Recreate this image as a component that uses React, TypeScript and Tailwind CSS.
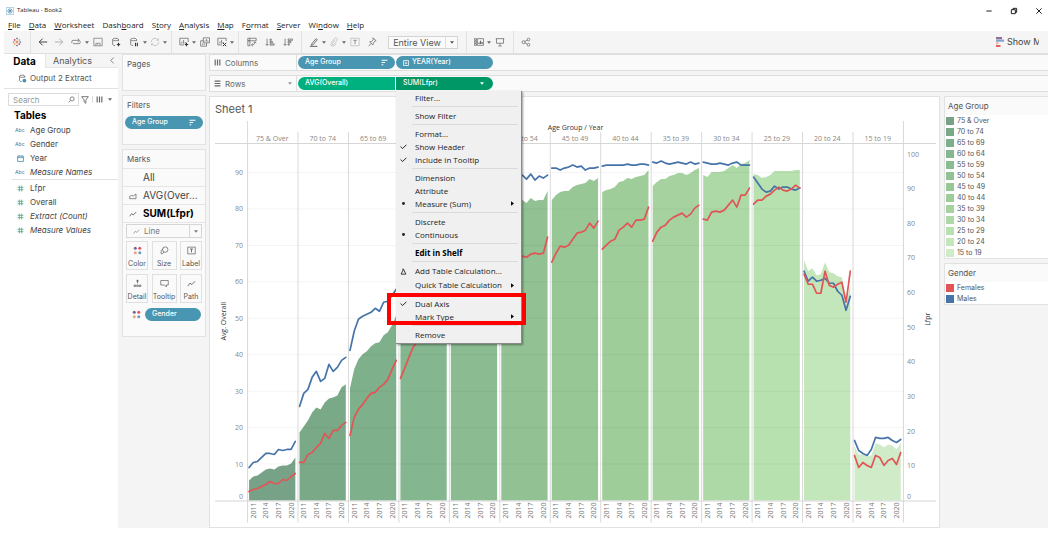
import type { ReactNode } from "react";

type Series = number[];
type Pane = { label: string; fill: string; area: Series; males: Series; females: Series };

/* Values are heights above the zero line, in chart units. */
const panes: Pane[] = [
  { label: "75 & Over", fill: "#78a287", area: [20, 24, 25, 28, 31, 32, 31, 34, 35, 35, 37, 43], males: [33, 38, 39, 43, 47, 47, 46, 51, 50, 51, 51, 59], females: [9, 11, 12, 14, 16, 19, 17, 17, 21, 20, 24, 27] },
  { label: "70 to 74", fill: "#79a987", area: [68, 74, 80, 88, 93, 91, 98, 102, 103, 105, 113, 116], males: [94, 107, 111, 123, 129, 119, 122, 136, 129, 133, 140, 143], females: [38, 38, 46, 48, 53, 57, 67, 62, 70, 70, 75, 78] },
  { label: "65 to 69", fill: "#7eb08b", area: [112, 131, 141, 146, 149, 154, 157, 158, 165, 168, 175, 185], males: [150, 169, 181, 184, 186, 188, 192, 189, 198, 199, 205, 211], females: [65, 83, 91, 96, 102, 107, 108, 113, 116, 121, 131, 140] },
  { label: "60 to 64", fill: "#84b68f", area: [190, 202, 210, 216, 220, 224, 228, 231, 235, 238, 243, 250], males: [228, 238, 246, 250, 255, 258, 262, 264, 267, 270, 274, 279], females: [122, 132, 143, 153, 158, 164, 169, 172, 178, 182, 188, 196] },
  { label: "55 to 59", fill: "#8abb91", area: [252, 257, 262, 266, 268, 270, 272, 274, 277, 279, 282, 286], males: [288, 292, 296, 299, 301, 303, 304, 306, 307, 309, 311, 314], females: [192, 198, 203, 208, 211, 214, 217, 219, 222, 225, 228, 232] },
  { label: "50 to 54", fill: "#92c194", area: [286, 291, 294, 296, 299, 300, 297, 302, 299, 300, 300, 309], males: [318, 321, 323, 324, 322, 325, 321, 326, 320, 324, 322, 325], females: [228, 233, 238, 241, 243, 244, 243, 246, 247, 246, 247, 263] },
  { label: "45 to 49", fill: "#98c796", area: [300, 305, 308, 309, 309, 313, 315, 316, 317, 321, 319, 322], males: [332, 332, 330, 332, 333, 335, 333, 334, 330, 332, 332, 333], females: [238, 247, 254, 253, 255, 261, 267, 268, 270, 277, 272, 279] },
  { label: "40 to 44", fill: "#9fcd9a", area: [308, 310, 311, 313, 318, 319, 322, 321, 323, 324, 325, 330], males: [334, 335, 335, 335, 335, 335, 336, 335, 335, 336, 336, 335], females: [251, 255, 259, 261, 270, 273, 277, 273, 280, 280, 281, 293] },
  { label: "35 to 39", fill: "#a6d2a0", area: [314, 318, 321, 321, 324, 325, 327, 327, 325, 327, 330, 332], males: [338, 337, 339, 337, 336, 337, 338, 337, 336, 338, 336, 337], females: [259, 268, 273, 275, 280, 283, 285, 287, 283, 286, 292, 295] },
  { label: "30 to 34", fill: "#add9a6", area: [325, 323, 328, 328, 328, 329, 332, 335, 332, 336, 337, 340], males: [338, 337, 336, 336, 337, 336, 335, 337, 338, 335, 335, 335], females: [281, 280, 288, 289, 288, 290, 295, 300, 293, 305, 305, 312] },
  { label: "25 to 29", fill: "#b7e1af", area: [326, 325, 322, 323, 325, 329, 329, 329, 329, 329, 330, 330], males: [323, 317, 311, 308, 309, 314, 311, 313, 313, 311, 310, 312], females: [296, 300, 300, 304, 306, 310, 313, 310, 309, 311, 315, 312] },
  { label: "20 to 24", fill: "#c3e6bb", area: [240, 229, 232, 225, 226, 238, 228, 227, 224, 223, 195, 215], males: [229, 219, 223, 219, 220, 222, 217, 217, 209, 205, 190, 204], females: [226, 216, 216, 207, 207, 229, 215, 213, 216, 218, 198, 229] },
  { label: "15 to 19", fill: "#cfebc8", area: [54, 46, 46, 44, 45, 57, 56, 53, 56, 55, 51, 58], males: [60, 50, 47, 45, 51, 63, 62, 62, 63, 60, 58, 61], females: [45, 33, 38, 35, 33, 45, 43, 35, 40, 42, 36, 48] },
];

const LEFT = 37;
const BASE = 386;
const RIGHT = 692;
const PANE = (RIGHT - LEFT) / panes.length;
const px = (pane: number, i: number) => LEFT + pane * PANE + 2 + i * 4.2;
const points = (s: Series, pane: number) => s.map((v, i) => `${px(pane, i).toFixed(1)},${BASE - v}`).join(" ");

function Chart() {
  return (
    <svg viewBox="0 0 728 412" className="block w-full font-['Open_Sans',sans-serif]" role="img" aria-label="Avg. Overall and Lfpr by age group and year">
      <text x="365" y="16" fontSize="7" textAnchor="middle" fill="#333">Age Group  /  Year</text>
      {panes.map((p, k) => (
        <g key={p.label}>
          <polygon points={`${px(k, 0)},${BASE} ${points(p.area, k)} ${px(k, 11)},${BASE}`} fill={p.fill} />
          <text x={LEFT + (k + 0.5) * PANE} y="26.500" fontSize="7" textAnchor="middle" fill="#888">{p.label}</text>
          {[2011, 2014, 2017, 2020].map((year, j) => (
            <text key={year} transform={`translate(${px(k, 1 + j * 3) + 2.5} 404) rotate(-90)`} fontSize="7" fill="#777">{year}</text>
          ))}
        </g>
      ))}
      {[1, 2, 3, 4, 5, 6, 7, 8, 9].map((n) => (
        <line key={n} x1={LEFT} x2={RIGHT} y1={BASE - n * 36.4} y2={BASE - n * 36.4} stroke="#000" strokeOpacity="0.045" />
      ))}
      {panes.map((p, k) => (
        <g key={p.label} fill="none" strokeWidth="1.7" strokeLinejoin="round" strokeLinecap="round">
          <polyline points={points(p.males, k)} stroke="#4674a9" />
          <polyline points={points(p.females, k)} stroke="#e15557" />
        </g>
      ))}
      {Array.from({ length: 14 }, (_, k) => (
        <line key={k} x1={LEFT + k * PANE + 0.5} x2={LEFT + k * PANE + 0.5} y1={k === 0 || k === 13 ? 7 : 18} y2="408" stroke="#d9d9d9" />
      ))}
      <line x1="5" x2="725" y1="29.500" y2="29.500" stroke="#d6d6d6" />
      <line x1="5" x2="725" y1="386.500" y2="386.500" stroke="#d6d6d6" />
      {[0, 1, 2, 3, 4, 5, 6, 7, 8, 9].map((n) => (
        <text key={n} x="33" y={BASE + 2.5 - (n === 0 ? 4 : n * 36.4)} fontSize="7" textAnchor="end" fill="#888">{n * 10}</text>
      ))}
      {[0, 1, 2, 3, 4, 5, 6, 7, 8, 9, 10].map((n) => (
        <text key={n} x="696" y={BASE + 2.5 - (n === 0 ? 4 : n * 34.6)} fontSize="7" fill="#888">{n * 10}</text>
      ))}
      <text transform="translate(16 207) rotate(-90)" fontSize="7" textAnchor="middle" fill="#333">Avg. Overall</text>
      <text transform="translate(719 205) rotate(-90)" fontSize="7" textAnchor="middle" fill="#333">Lfpr</text>
    </svg>
  );
}

function Svg({ children, className = "h-3 w-3" }: { children: ReactNode; className?: string }) {
  return (
    <svg viewBox="0 0 12 12" className={`${className} shrink-0`} fill="none" stroke="currentColor" strokeWidth="0.9" aria-hidden="true">
      {children}
    </svg>
  );
}

const plus = <path d="M9 7v4M7 9h4" stroke="#333" strokeWidth="1.4" />;
const bars = <path d="M3.500 8V5.500M5.500 8V3.500M7.500 8V6" />;

const glyphs: Record<string, ReactNode> = {
  logo: (
    <>
      <path d="M6 4.300v3.400M4.300 6h3.400" stroke="#e8762d" strokeWidth="1.200" />
      <path d="M6 .8v2M5 1.800h2" stroke="#5c6692" />
      <path d="M6 9.200v2M5 10.200h2" stroke="#5c6692" />
      <path d="M1 6h2M2 5v2" stroke="#6aa5b5" />
      <path d="M9 6h2M10 5v2" stroke="#4e79a7" />
      <path d="M3.200 2.500v2M2.200 3.500h2M8.800 7.500v2M7.800 8.500h2" stroke="#c72035" />
      <path d="M8.800 2.500v2M7.800 3.500h2M3.200 7.500v2M2.200 8.500h2" stroke="#eb912c" />
    </>
  ),
  back: <path d="M11 6H1.500M5.500 2L1.500 6l4 4" strokeWidth="1.200" stroke="#444" />,
  forward: <path d="M1 6h9.500M6.500 2l4 4-4 4" stroke="#999" />,
  replay: <path d="M1 7.500V5.500Q1 4 2.500 4H10M8 2l2.200 2L8 6M11 5v1.500Q11 8 9.500 8H2.500" />,
  save: <path d="M1 1.500h10v9H1zM3.500 10.500V7.500h5v3M5 9h1" stroke="#777" />,
  data: <><path d="M9 5V3M2 3v6q0 1 3 1.300M2 3q0-1.500 3.500-1.500T9 3 5.500 4.500 2 3" />{plus}</>,
  pause: <><path d="M9 5V3M2 3v6q0 1 3 1.300M2 3q0-1.500 3.500-1.500T9 3 5.500 4.500 2 3" /><path d="M7.800 7v4M10 7v4" stroke="#333" strokeWidth="1.300" /></>,
  refresh: <path d="M1.500 6A4.500 4.500 0 0 1 9.700 3.500M10.500 6A4.500 4.500 0 0 1 2.300 8.500M8 4h2.200V1.800M4 8H1.800v2.200" stroke="#bbb" />,
  sheet: <><path d="M11 6V1.500H1v8h5" />{bars}{plus}</>,
  duplicate: <><path d="M4 1h7.500v6H4zM4 4.500H.8V11h7V7" /><path d="M6 5.500V4M7.800 5.500v-3M9.500 5.500V4M3 9.500V8M5 9.500V8" /></>,
  clear: <><path d="M11 5V1.500H1v8h5" />{bars}<path d="M7 7l4 4M11 7l-4 4" stroke="#333" strokeWidth="1.200" /></>,
  swap: <path d="M1 1.500h10v3H1zM1 4.500h2.500V10.500H1zM3.500 1.500v3M9.500 6c0 2.500-1.500 3.500-4 3.500M7 8L5.300 9.600 7 11.200M8 7.300L9.500 5.600 11 7.300" />,
  asc: <path d="M2.500 2v8M.8 8.300l1.700 1.900 1.700-1.900M6 2.500h1.500V4H6zM6 5.300h3v1.500H6zM6 8.200h5v1.500H6z" />,
  desc: <path d="M2.500 2v8M.8 8.300l1.700 1.900 1.700-1.900M6 2.500h5.500V4H6zM6 5.300h3.500v1.500H6zM6 8.200h1.700v1.500H6z" />,
  pen: <><path d="M3.500 8l5-6 1.500 1.200-5 6-2.200.8z" strokeWidth="1.100" /><path d="M1 11.200h9" strokeWidth="1.200" /></>,
  clip: <path d="M7 3.500L4 7.500q-.6 1.200.3 1.700t1.700-.4L9.500 4q1-1.700-.4-2.600T6.500 2L3 6.500Q1.300 9 3 10.500t4-.5L8.500 8" stroke="#bbb" />,
  text: <><path d="M1 1.500h10v9H1z" stroke="#bbb" /><path d="M4 4h4M6 4v4.500" stroke="#888" strokeWidth="1.100" /></>,
  pin: <path d="M7 1l4 3.500-1.500.3-2 2.500-.3 2.200-4-3.700 2.300-.3 2-2.500zM5 7.800L2 11" />,
  cards: <><path d="M.5 2h2.500v2H.5zM.5 5h2.500v2H.5zM.5 8h2.500v2H.5zM4 2h7.500v8H4z" /><path d="M6 8.500V6.500M7.800 8.500v-4M9.700 8.500V6" strokeWidth="1.400" /></>,
  present: <path d="M.8 2h10.400M1.800 2v5.500h8.400V2M6 7.500v3M4 10.800h4" />,
  share: <><circle cx="3" cy="6.200" r="1.800" /><circle cx="9" cy="3" r="1.600" /><circle cx="9" cy="9.300" r="1.600" /><path d="M4.600 5.400l2.900-1.600M4.600 7l2.900 1.500" /></>,
  area: <path d="M1 10V6.500l3-1.500 2.500 1L10.500 3v7z" />,
  line: <path d="M1 9.500L4 5.500l2.500 2L10.800 3" strokeWidth="1.100" />,
  size: <><circle cx="7" cy="4.800" r="3.600" /><path d="M4 3.500Q1 6 1.200 9q0 1.500 1.500 1.500T5 8" /></>,
  label: <><path d="M1 1.500h10v9H1z" /><path d="M4 4h4M6 4v4.500" strokeWidth="1.100" /></>,
  detail: <><circle cx="6" cy="2.500" r="1" fill="currentColor" /><path d="M6 3v3M1.500 8h2v2h-2zM5 8h2v2H5zM8.500 8h2v2h-2z" /></>,
  tooltip: <path d="M1 2h10v6H8.500v2.500L6 8H1z" />,
  database: <><path d="M9 5V3M2 3v6q0 1 3 1.300M2 3q0-1.500 3.500-1.500T9 3 5.500 4.500 2 3" /><circle cx="8.500" cy="8.700" r="2.500" fill="#4a90b0" stroke="none" /></>,
};

const Glyph = ({ name, className }: { name: string; className?: string }) => <Svg className={className}>{glyphs[name]}</Svg>;

function ColorDots() {
  return (
    <svg viewBox="0 0 12 12" className="h-[9px] w-[9px] shrink-0" aria-hidden="true">
      <circle cx="3" cy="3" r="2" fill="#7b6690" />
      <circle cx="9" cy="3" r="2" fill="#e15563" />
      <circle cx="3" cy="9" r="2" fill="#f0a17a" />
      <circle cx="9" cy="9" r="2" fill="#6d9cc8" />
    </svg>
  );
}

const Caret = ({ className = "w-2" }: { className?: string }) => (
  <span className={`flex shrink-0 justify-center ${className}`}>
    <svg viewBox="0 0 6 4" className="h-[3px] w-1 fill-current" aria-hidden="true"><path d="M0 0h6L3 4z" /></svg>
  </span>
);

const Tool = ({ name, label, className = "w-4" }: { name: string; label: string; className?: string }) => (
  <button aria-label={label} className={`flex h-4 shrink-0 items-center justify-center ${className}`}><Glyph name={name} className="h-[10px] w-[10px]" /></button>
);
const Rule = ({ className = "mx-1" }: { className?: string }) => <span className={`h-full w-px shrink-0 bg-[#e2e2e2] ${className}`} />;

function Toolbar() {
  return (
    <div className="ml-1 flex h-[22px] items-center overflow-hidden bg-[#f5f5f5] text-[#666]">
      <Tool name="logo" label="Start page" className="w-[26px]" />
      <Rule className="mr-1" />
      <Tool name="back" label="Undo" className="w-4" />
      <Tool name="forward" label="Redo" className="w-4" />
      <Tool name="replay" label="Replay" className="w-[18px]" />
      <Caret className="w-1" />
      <Tool name="save" label="Save" className="w-[18px]" />
      <Tool name="data" label="New data source" className="w-[18px]" />
      <Tool name="pause" label="Pause updates" className="w-[18px]" />
      <Caret className="w-1" />
      <Tool name="refresh" label="Refresh" className="w-4" />
      <Caret className="w-1" />
      <Rule />
      <Tool name="sheet" label="New worksheet" className="w-4" />
      <Caret className="w-1" />
      <Tool name="duplicate" label="Duplicate" className="w-[18px]" />
      <Tool name="clear" label="Clear sheet" className="w-4" />
      <Caret className="w-1" />
      <Rule />
      <Tool name="swap" label="Swap rows and columns" className="w-[18px]" />
      <Tool name="asc" label="Sort ascending" className="w-[18px]" />
      <Tool name="desc" label="Sort descending" className="w-[18px]" />
      <Rule />
      <Tool name="pen" label="Highlight" className="w-4" />
      <Caret className="w-1" />
      <Tool name="clip" label="Group members" className="w-4" />
      <Caret className="w-1" />
      <Tool name="text" label="Show mark labels" className="w-[18px]" />
      <Tool name="pin" label="Fix axes" className="w-4" />
      <button className="ml-2 flex h-[13px] w-[70px] shrink-0 items-center border border-[#d4d4d4] bg-[#fafafa] text-[9px] leading-none text-[#555]">
        <span className="flex-1">Entire View</span>
        <span className="flex h-full w-3 items-center justify-center border-l border-[#e0e0e0]"><Caret /></span>
      </button>
      <Rule className="mr-1 ml-2" />
      <Tool name="cards" label="Show/hide cards" className="w-4" />
      <Caret className="w-1" />
      <Tool name="present" label="Presentation mode" className="w-[18px]" />
      <Rule />
      <Tool name="share" label="Share" className="w-4" />
      <button className="mr-[9px] ml-auto flex w-[43px] shrink-0 items-center gap-[3px] overflow-hidden text-[9px] whitespace-nowrap text-[#444]">
        <svg viewBox="0 0 8 10" className="h-[10px] w-2 shrink-0" aria-hidden="true">
          <path d="M0 0h6v2.300H0z" fill="#8f7097" /><path d="M0 2.600h8v2.100H0z" fill="#7fa3cc" /><path d="M0 5.300h2.500v2H0z" fill="#f0b09a" /><path d="M0 8h4.500v2H0z" fill="#e8606a" />
        </svg>
        Show Me
      </button>
    </div>
  );
}

const menuBar: [string, string, string][] = [
  ["", "F", "ile"], ["", "D", "ata"], ["", "W", "orksheet"], ["Dash", "b", "oard"], ["S", "t", "ory"], ["", "A", "nalysis"],
  ["", "M", "ap"], ["F", "o", "rmat"], ["", "S", "erver"], ["Wi", "n", "dow"], ["", "H", "elp"],
];

function TitleBar() {
  return (
    <header className="font-['Open_Sans',sans-serif] text-[#222]">
      <div className="flex h-[19px] items-center pt-[2px] pl-[6px] text-[6px]">
        <span className="flex h-2 w-2 items-center justify-center border border-[#b7d3e6] text-[#4a90b0]"><Svg className="h-[6px] w-[6px]"><path d="M6 0v12M0 6h12M2 2l8 8M10 2l-8 8" strokeWidth="1.500" /></Svg></span>
        <span className="ml-[3px] flex-1">Tableau - Book2</span>
        <button aria-label="Minimize" className="flex w-[18px] justify-center"><Svg className="h-2 w-2"><path d="M2 6h8" strokeWidth="1.500" /></Svg></button>
        <button aria-label="Restore" className="flex w-8 justify-center"><Svg className="h-2 w-2"><path d="M2 4h6v6H2zM4.500 4V2h5.500v6H8" strokeWidth="1.500" /></Svg></button>
        <button aria-label="Close" className="flex w-[18px] justify-center"><Svg className="h-2 w-2"><path d="M2 2l8 8M10 2l-8 8" strokeWidth="1.500" /></Svg></button>
      </div>
      <nav className="flex h-3 items-center gap-2 pl-2 text-[8px] leading-3">
        {menuBar.map(([a, b, c]) => (
          <button key={a + b + c}>{a}<u>{b}</u>{c}</button>
        ))}
      </nav>
    </header>
  );
}

const fields: { icon: "Abc" | "date" | "num"; name: string; italic?: boolean }[] = [
  { icon: "Abc", name: "Age Group" }, { icon: "Abc", name: "Gender" }, { icon: "date", name: "Year" }, { icon: "Abc", name: "Measure Names", italic: true },
  { icon: "num", name: "Lfpr" }, { icon: "num", name: "Overall" }, { icon: "num", name: "Extract (Count)", italic: true }, { icon: "num", name: "Measure Values", italic: true },
];

function FieldIcon({ kind }: { kind: string }) {
  if (kind === "Abc") return <span className="w-[15px] text-[5px] font-medium text-[#4a90b0]">Abc</span>;
  return (
    <span className={`flex w-[15px] pl-[2px] ${kind === "date" ? "text-[#4a90b0]" : "text-[#3fa57d]"}`}>
      <Svg className="h-[7px] w-[7px]">
        {kind === "date" ? <path d="M1 2h10v9H1zM1 4.500h10M3.500 0v2M8.500 0v2" strokeWidth="1.400" /> : <path d="M4 1v10M8 1v10M1 4h10M1 8h10" strokeWidth="1.300" />}
      </Svg>
    </span>
  );
}

function DataPane() {
  return (
    <aside className="w-[114px] shrink-0 bg-white text-[#444]">
      <div className="flex h-[14px] text-[10px] leading-[14px]">
        <button className="w-[41px] font-bold text-black">Data</button>
        <button className="flex flex-1 items-center border-b border-l border-[#e6e6e6] bg-[#f5f5f5] pl-[7px] text-[9px] text-[#555]">
          <span className="flex-1 text-left">Analytics</span>
          <Svg className="mr-[2px] h-[7px] w-[7px]"><path d="M8 1L3 6l5 5" strokeWidth="1.200" /></Svg>
        </button>
      </div>
      <div className="flex h-[21px] items-center gap-[3px] border-b border-[#e2e2e2] pl-[14px] text-[8px] text-[#555]">
        <Glyph name="database" className="h-[9px] w-[9px]" />Output 2 Extract
      </div>
      <div className="mt-1 flex h-[13px] items-center pl-1 text-[#666]">
        <label className="flex h-[13px] w-[71px] items-center border border-[#dcdcdc] pr-[3px]">
          <input aria-label="Search fields" placeholder="Search" className="w-0 flex-1 pl-1 text-[8px] leading-none outline-none placeholder:text-[#999]" />
          <Svg className="h-[7px] w-[7px]"><circle cx="7" cy="5" r="3.500" strokeWidth="1.300" /><path d="M4.500 7.500L1 11" strokeWidth="1.300" /></Svg>
        </label>
        <button aria-label="Filter fields" className="ml-[2px] pr-[3px]"><Svg className="h-2 w-2"><path d="M1 1h10L7.300 6v5L4.700 9V6z" strokeWidth="1.300" /></Svg></button>
        <button aria-label="View" className="flex items-center gap-[3px] border-l border-[#dcdcdc] pl-[3px]"><Svg className="h-[7px] w-[7px]"><path d="M2 1v10M6 1v10M10 1v10" strokeWidth="2" /></Svg><Caret /></button>
      </div>
      <h2 className="mt-[2px] pl-[10px] text-[10px] leading-[14px] font-bold text-black">Tables</h2>
      <ul className="pt-px text-[8px] leading-[14px]">
        {fields.map((f, i) => (
          <li key={f.name} className={i === 4 ? "ml-2 flex items-center border-t border-[#e2e2e2] pt-px pl-[3px]" : "flex items-center pl-[11px]"}>
            <FieldIcon kind={f.icon} />
            <span className={f.italic ? "italic" : ""}>{f.name}</span>
          </li>
        ))}
      </ul>
    </aside>
  );
}

const SortMark = () => <Svg className="h-[7px] w-[7px]"><path d="M1 2h10M1 6h6M1 10h3" strokeWidth="1.800" /></Svg>;

function Cards() {
  return (
    <div className="flex w-[91px] shrink-0 flex-col gap-1 bg-[#f4f4f4] pr-[3px] pl-1 text-[8px] text-[#555]">
      <section className="h-[37px] border border-[#e2e2e2] bg-[#fafafa] px-1 pt-[3px]"><h3 className="leading-3">Pages</h3></section>
      <section className="h-[50px] border border-[#e2e2e2] bg-[#fafafa] pt-[3px]">
        <h3 className="px-1 leading-3">Filters</h3>
        <button className="mt-[5px] ml-[2px] flex h-[13px] w-[78px] items-center justify-between rounded-full bg-[#4996b2] px-[7px] text-[7px] font-medium text-white">Age Group<SortMark /></button>
      </section>
      <section className="h-[188px] border border-[#e2e2e2] bg-[#fafafa]">
        <h3 className="px-1 py-[3px] leading-3">Marks</h3>
        <div className="text-[10px] leading-[17px] text-[#444]">
          <button className="block w-full border-t border-[#e6e6e6] pl-5 text-left">All</button>
          <button className="flex w-full items-center border-t border-[#e6e6e6] pl-[6px]"><Glyph name="area" className="h-2 w-2" /><span className="pl-[6px]">AVG(Over...</span></button>
          <button className="flex w-full items-center border-y border-[#e6e6e6] pl-[6px]"><Glyph name="line" className="h-2 w-2" /><span className="pl-[6px] font-bold text-black">SUM(Lfpr)</span></button>
        </div>
        <button className="mt-px ml-[3px] flex h-[14px] w-[76px] items-center border border-[#d6d6d6] pl-[6px] text-[#777]">
          <Glyph name="line" className="h-[7px] w-[7px]" /><span className="flex-1 pl-1 text-left">Line</span>
          <span className="flex h-full items-center border-l border-[#d6d6d6]"><Caret className="w-[11px]" /></span>
        </button>
        <div className="mt-[3px] ml-[3px] grid w-[76px] grid-cols-[22px_25px_22px] justify-between gap-y-1 text-[7px]">
          {["Color", "size", "label", "detail", "tooltip", "Path"].map((n) => (
            <button key={n} className="flex h-[29px] flex-col items-center justify-between border border-[#e0e0e0] pt-1 pb-px leading-[9px] capitalize">
              {n === "Color" ? <ColorDots /> : <Glyph name={n === "Path" ? "line" : n} className="h-[9px] w-[9px]" />}
              {n}
            </button>
          ))}
        </div>
        <div className="mt-[5px] flex items-center gap-1 pl-[9px]">
          <ColorDots />
          <button className="flex h-[13px] w-14 items-center rounded-full bg-[#4996b2] px-[7px] text-[7px] font-medium text-white">Gender</button>
        </div>
      </section>
    </div>
  );
}

type Item = { text: string; mark?: "check" | "dot" | "delta"; sub?: boolean; bold?: boolean; tall?: boolean };
const menuGroups: Item[][] = [
  [{ text: "Filter..." }],
  [{ text: "Show Filter" }],
  [{ text: "Format..." }, { text: "Show Header", mark: "check" }, { text: "Include in Tooltip", mark: "check" }],
  [{ text: "Dimension" }, { text: "Attribute" }, { text: "Measure (Sum)", mark: "dot", sub: true }],
  [{ text: "Discrete" }, { text: "Continuous", mark: "dot" }],
  [{ text: "Edit in Shelf", bold: true }],
  [{ text: "Add Table Calculation...", mark: "delta", tall: true }, { text: "Quick Table Calculation", sub: true, tall: true }],
  [{ text: "Dual Axis", mark: "check" }, { text: "Mark Type", sub: true }],
  [{ text: "Remove" }],
];

function ContextMenu() {
  return (
    <div role="menu" className="absolute top-full left-0 z-10 mt-px w-[126px] border-r border-b border-[#8a8a8a] bg-[#f0f0f0] pb-[2px] font-['Open_Sans',sans-serif] text-[8px] text-[#222] shadow-[1px_1px_2px_rgba(0,0,0,0.4)]">
      {menuGroups.map((group, g) => (
        <div key={g}>
          {g > 0 && <div className="mr-[3px] ml-4 py-[2px]"><div className="h-px bg-[#dadada]" /></div>}
          <div className="relative">
            {group.map((item) => (
              <button key={item.text} role="menuitem" className={`flex w-full items-center pr-[7px] text-left ${item.tall ? "h-[14px]" : "h-[13px]"} ${item.bold ? "font-bold text-black" : ""}`}>
                <span className="flex w-[19px] shrink-0 pl-1">
                  {item.mark && (
                    <Svg className="h-[7px] w-[7px]">
                      {item.mark === "check" && <path d="M1 6l3.500 3.500L11 3" strokeWidth="1.700" />}
                      {item.mark === "dot" && <circle cx="6" cy="6" r="2.500" fill="currentColor" stroke="none" />}
                      {item.mark === "delta" && <path d="M6 2L10 10.500H2zM4 2h2" strokeWidth="1.500" />}
                    </Svg>
                  )}
                </span>
                <span className="flex-1 whitespace-nowrap">{item.text}</span>
                {item.sub && <svg viewBox="0 0 4 6" className="h-[5px] w-[3px] fill-black" aria-hidden="true"><path d="M0 0v6l4-3z" /></svg>}
              </button>
            ))}
            {g === 7 && <div className="pointer-events-none absolute -top-1 -right-[5px] -bottom-[2px] -left-[9px] border-4 border-[#fe0000]" />}
          </div>
        </div>
      ))}
    </div>
  );
}

function Shelf({ label, icon, caret, children }: { label: string; icon: ReactNode; caret?: boolean; children: ReactNode }) {
  return (
    <div className="flex h-[17px] border-y border-l border-[#dedede] bg-[#fafafa]">
      <div className="flex w-[87px] shrink-0 items-center gap-1 border-r border-[#dedede] pr-[2px] pl-1 text-[8px] text-[#666]">
        <Svg className="h-[7px] w-[7px]">{icon}</Svg>
        <span className="flex-1">{label}</span>
        {caret && <Caret className="w-2 text-[#999]" />}
      </div>
      <div className="flex items-center gap-px pl-px text-[7px] font-medium text-white">{children}</div>
    </div>
  );
}

const Legend = ({ title, items }: { title: string; items: [string, string][] }) => (
  <section className="border border-r-0 border-[#e2e2e2] bg-white text-[7px] text-[#555]">
    <h3 className="bg-[#fafafa] px-[3px] text-[8px] leading-[18px]">{title}</h3>
    <ul className="leading-[11px]">
      {items.map(([name, color]) => (
        <li key={name} className="flex items-center gap-[3px] pl-px">
          <svg className="h-2 w-2" aria-hidden="true"><rect width="8" height="8" fill={color} /></svg>{name}
        </li>
      ))}
    </ul>
  </section>
);

export default function App() {
  return (
    <div className="min-h-screen overflow-hidden bg-white font-['Inter',sans-serif]">
      <TitleBar />
      <Toolbar />
      <main className="ml-1 flex border-t border-[#e0e0e0] bg-[#f4f4f4]">
        <DataPane />
        <Cards />
        <div className="flex min-w-0 flex-1 flex-col gap-1">
          <Shelf label="Columns" icon={<path d="M2 1v10M6 1v10M10 1v10" strokeWidth="2" />}>
            <button className="flex h-[13px] w-[97px] items-center justify-between rounded-full bg-[#4996b2] px-[7px]">Age Group<SortMark /></button>
            <button className="flex h-[13px] w-[97px] items-center gap-[3px] rounded-full bg-[#4996b2] px-[7px]">
              <Svg className="h-[6px] w-[6px]"><path d="M1 1h10v10H1zM6 3.500v5M3.500 6h5" strokeWidth="1.500" /></Svg>YEAR(Year)
            </button>
          </Shelf>
          <Shelf label="Rows" caret icon={<path d="M1 2h10M1 6h10M1 10h10" strokeWidth="2" />}>
            <button className="flex h-[13px] w-[97px] items-center rounded-l-full bg-[#00b180] px-[7px]">AVG(Overall)</button>
            <div className="relative">
              <button className="flex h-[13px] w-[97px] items-center justify-between rounded-r-full bg-[#009767] px-[7px]">SUM(Lfpr)<Caret /></button>
              <ContextMenu />
            </div>
          </Shelf>
          <div className="flex items-start gap-1">
            <section className="min-w-0 flex-1 border border-[#e2e2e2] bg-white">
              <h1 className="h-[17px] pt-1 pl-[5px] text-[11px] leading-4 text-[#555]">Sheet 1</h1>
              <Chart />
            </section>
            <div className="flex w-[104px] shrink-0 flex-col gap-1">
              <Legend title="Age Group" items={panes.map((p) => [p.label, p.fill])} />
              <Legend title="Gender" items={[["Females", "#e15557"], ["Males", "#4674a9"]]} />
            </div>
          </div>
        </div>
      </main>
    </div>
  );
}
